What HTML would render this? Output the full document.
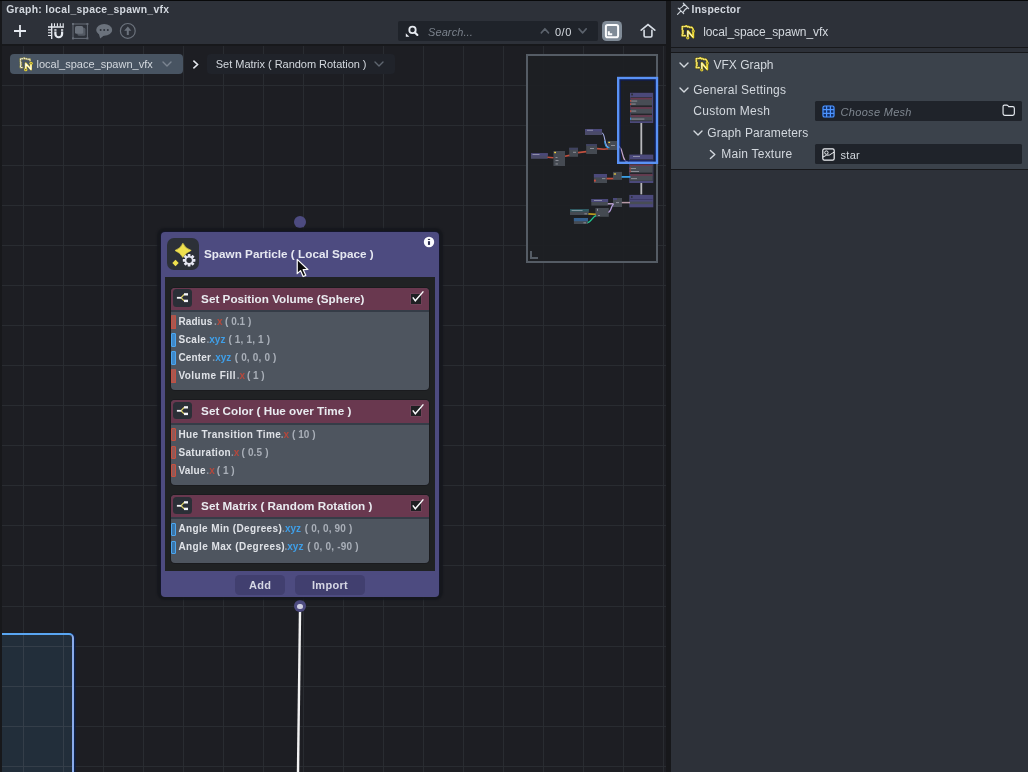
<!DOCTYPE html>
<html><head><meta charset="utf-8">
<style>
*{box-sizing:border-box;margin:0;padding:0}
html,body{width:1028px;height:772px;overflow:hidden;background:#17181b;font-family:"Liberation Sans",sans-serif;}
.abs{position:absolute}
#root{will-change:transform;position:absolute;left:0;top:0;width:1028px;height:772px;overflow:hidden;background:#17181b}
.t{position:absolute;white-space:pre;line-height:1}
/* graph panel */
#gpanel{position:absolute;left:2px;top:0;width:664px;height:772px;background:#1d1e23;overflow:hidden}

#topbar{position:absolute;left:0;top:0;width:664px;height:44px;background:#2d3139}
#topline{position:absolute;left:0;top:44px;width:664px;height:2px;background:#17181b}
/* node */
.row{position:absolute;left:0;height:13px;width:100%}
.port{position:absolute;left:0.2px;top:-0.6px;width:4.6px;height:13.6px;border-radius:1px}
.pr{background:#a85850;border:1px solid #c25043;border-top-color:#a85850}
.pb{background:#3f88c8;border:1px solid #4aa6f0}
.pbo{background:#3b74a6;border:1px solid #4aa6f0}
.lbl{position:absolute;left:7.3px;top:0.7px;font-size:10px;font-weight:bold;color:#e6e8ec;white-space:pre;line-height:12px;letter-spacing:0.39px}
.lbl .x{color:#c9503f;font-weight:normal;letter-spacing:0}
.lbl .z{color:#3fa2ec;font-weight:normal;letter-spacing:0}
.lbl .v{color:#b4b9c1;font-weight:normal;letter-spacing:0.2px;margin-left:0.6px}
.sub{position:absolute;left:171px;width:258.2px;background:#4e555f;border-radius:4px;overflow:hidden;box-shadow:0 0 0 1px #1a1b1e}
.sub .hd{position:absolute;left:0;top:0;width:100%;height:24.3px;background:#69384f;border-bottom:2.3px solid #353c47}
.sub .ib{position:absolute;left:2.3px;top:1.4px;width:18.6px;height:17.7px;background:#2b2f37;border-radius:3.5px}
.sub .ttl{position:absolute;left:30.1px;top:4.9px;font-size:11.7px;font-weight:bold;color:#e9ebf0;white-space:pre;line-height:12px;letter-spacing:0.02px}
.cb{position:absolute;left:239.9px;top:6.2px;width:10.2px;height:10px;background:#1f2023;box-shadow:0 0 0 0.8px rgba(120,80,100,0.55)}
.sub svg.ic{position:absolute;left:0;top:-0.5px}

.row span{position:absolute;top:0.3px;font-size:10px;line-height:12px;white-space:pre}
.lb{font-weight:bold;color:#dfe2e7}
.dt{color:#8f97a1;font-weight:bold}
.sf{font-weight:bold}
.sx{color:#b5483c}
.sz{color:#3f9fe8}
.vl{color:#a9afb8;font-weight:bold}
.pro{background:#905a58;border:1px solid #c8503f}
use{stroke-width:1.4}
</style></head><body><div id="root">

<div id="gpanel">
 <svg id="grid" style="position:absolute;left:0;top:0" width="664" height="772" shape-rendering="crispEdges"><g fill="#292c31"><rect x="0" y="85" width="664" height="1"/><rect x="0" y="125" width="664" height="1"/><rect x="0" y="165" width="664" height="1"/><rect x="0" y="205" width="664" height="1"/><rect x="0" y="245" width="664" height="1"/><rect x="0" y="285" width="664" height="1"/><rect x="0" y="325" width="664" height="1"/><rect x="0" y="365" width="664" height="1"/><rect x="0" y="405" width="664" height="1"/><rect x="0" y="445" width="664" height="1"/><rect x="0" y="485" width="664" height="1"/><rect x="0" y="525" width="664" height="1"/><rect x="0" y="565" width="664" height="1"/><rect x="0" y="606" width="664" height="1"/><rect x="0" y="646" width="664" height="1"/><rect x="0" y="686" width="664" height="1"/><rect x="0" y="726" width="664" height="1"/><rect x="0" y="766" width="664" height="1"/><rect x="21" y="46" width="1" height="726"/><rect x="61" y="46" width="1" height="726"/><rect x="101" y="46" width="1" height="726"/><rect x="141" y="46" width="1" height="726"/><rect x="181" y="46" width="1" height="726"/><rect x="221" y="46" width="1" height="726"/><rect x="261" y="46" width="1" height="726"/><rect x="301" y="46" width="1" height="726"/><rect x="341" y="46" width="1" height="726"/><rect x="381" y="46" width="1" height="726"/><rect x="421" y="46" width="1" height="726"/><rect x="461" y="46" width="1" height="726"/><rect x="501" y="46" width="1" height="726"/><rect x="541" y="46" width="1" height="726"/><rect x="581" y="46" width="1" height="726"/><rect x="621" y="46" width="1" height="726"/><rect x="661" y="46" width="1" height="726"/></g></svg>

 <!-- selection box bottom-left -->
 <div class="abs" style="left:-4px;top:633px;width:75.5px;height:160px;background:#222e3a;border:2px solid #59a6f2;border-right-color:#8aabea;border-radius:0 5px 0 0;box-shadow:1.5px 0 0 #0d2148;overflow:hidden">
   <svg class="abs" style="left:0;top:0" width="80" height="140" shape-rendering="crispEdges"><g fill="#343e49"><rect x="0" y="11" width="80" height="1"/><rect x="0" y="51" width="80" height="1"/><rect x="0" y="91" width="80" height="1"/><rect x="0" y="131" width="80" height="1"/><rect x="23" y="0" width="1" height="140"/><rect x="63" y="0" width="1" height="140"/></g></svg>
 </div>

 <!-- connection line -->
 <svg class="abs" style="left:0;top:0" width="664" height="772"><line x1="298" y1="612" x2="296" y2="772" stroke="#f2f2f2" stroke-width="2.4"/></svg>

 <!-- top port -->
 <div class="abs" style="left:291.8px;top:215.8px;width:12.4px;height:12.4px;border-radius:50%;background:#4d4b80"></div>
 <!-- bottom port -->
 <div class="abs" style="left:291.9px;top:600.4px;width:12px;height:12px;border-radius:50%;background:#4d4b80"></div>
 <div class="abs" style="left:295.1px;top:603.6px;width:5.6px;height:5.6px;border-radius:50%;background:#cfcfe0"></div>
</div>

<!-- NODE (absolute page coords) -->
<div class="abs" style="left:160.4px;top:231.2px;width:279.4px;height:366px;background:#14162a;border-radius:5px;box-shadow:0 0 1.5px 2.4px rgba(21,23,28,0.92)"></div>
<div class="abs" style="left:161px;top:232px;width:278.3px;height:364.7px;background:#4d4b80;border-radius:4px"></div>
<div class="abs" style="left:165.2px;top:277.4px;width:270px;height:294px;background:#202224"></div>
<!-- icon box -->
<div class="abs" style="left:167.2px;top:237.9px;width:32px;height:31.9px;background:#2c3038;border-radius:7px"></div>
<svg class="abs" style="left:167px;top:238px" width="33" height="32" viewBox="0 0 33 32">
  <path d="M15.9 5.2 Q18.2 10.6 24.2 12.4 Q18.8 14.4 15.9 19.5 Q13.2 14.6 8 12.5 Q13.8 10.4 15.9 5.2 Z" fill="#efe04e" stroke="#efe04e" stroke-width="0.6" stroke-linejoin="round"/>
  <path d="M8.5 21.8 L11.7 25 L8.5 28.2 L5.3 25Z" fill="#efe04e"/>
  <g transform="translate(22.1,22.3)" fill="#e6e7f2">
   <circle r="4.4"/><rect x="-1.35" y="-6.3" width="2.7" height="3" rx="0.3" transform="rotate(0)"/><rect x="-1.35" y="-6.3" width="2.7" height="3" rx="0.3" transform="rotate(45)"/><rect x="-1.35" y="-6.3" width="2.7" height="3" rx="0.3" transform="rotate(90)"/><rect x="-1.35" y="-6.3" width="2.7" height="3" rx="0.3" transform="rotate(135)"/><rect x="-1.35" y="-6.3" width="2.7" height="3" rx="0.3" transform="rotate(180)"/><rect x="-1.35" y="-6.3" width="2.7" height="3" rx="0.3" transform="rotate(225)"/><rect x="-1.35" y="-6.3" width="2.7" height="3" rx="0.3" transform="rotate(270)"/><rect x="-1.35" y="-6.3" width="2.7" height="3" rx="0.3" transform="rotate(315)"/>
   <circle r="2.7" fill="#2c3038"/>
  </g>
</svg>
<div class="t" style="left:204px;top:248.1px;font-size:11.7px;font-weight:bold;color:#e6e8f1;letter-spacing:0.03px;line-height:12px">Spawn Particle ( Local Space )</div>
<!-- info icon -->
<svg class="abs" style="left:422.9px;top:236px" width="12" height="12" viewBox="0 0 12 12"><circle cx="6" cy="6" r="5.2" fill="#fdfdff"/><rect x="4.95" y="5.2" width="2.1" height="3.7" fill="#2a2c52"/><rect x="4.9" y="2.9" width="2.2" height="1.1" fill="#33344e"/></svg>

<!-- sub node 1 -->
<div class="sub" style="top:287.7px;height:102px">
 <div class="hd"></div><div class="ib"></div>
 <div class="ttl">Set Position Volume (Sphere)</div><div class="cb"></div><svg class="ic" width="259" height="23" viewBox="0 0 259 23"><path d="M10 10.8 L13.2 7.4 M10 10.8 L13.2 13.9" stroke="#d8cf6a" stroke-width="1.3" fill="none"/><rect x="5.9" y="9.9" width="4.3" height="1.8" fill="#f6f6fa"/><rect x="13" y="6.2" width="4" height="2.3" fill="#f6f6fa"/><rect x="13" y="12.7" width="4" height="2.4" fill="#f6f6fa"/><path d="M241.8 10.4 L244.3 13.8 L252.4 4.4" stroke="#fafafc" stroke-width="1.45" fill="none" stroke-linejoin="miter"/></svg>
 <div class="row" style="top:28px"><div class="port pr"></div><span class="lb" style="left:7.40px;letter-spacing:0.111px">Radius</span><span class="dt" style="left:43.02px">.</span><span class="sf sx" style="left:45.90px">x</span><span class="vl" style="left:54.00px;letter-spacing:0.029px">( 0.1 )</span></div>
 <div class="row" style="top:46px"><div class="port pb"></div><span class="lb" style="left:7.40px;letter-spacing:0.340px">Scale</span><span class="dt" style="left:35.42px">.</span><span class="sf sz" style="left:38.30px">xyz</span><span class="vl" style="left:57.40px;letter-spacing:0.158px">( 1, 1, 1 )</span></div>
 <div class="row" style="top:64px"><div class="port pb"></div><span class="lb" style="left:7.40px;letter-spacing:0.143px">Center</span><span class="dt" style="left:41.32px">.</span><span class="sf sz" style="left:44.20px">xyz</span><span class="vl" style="left:63.70px;letter-spacing:0.168px">( 0, 0, 0 )</span></div>
 <div class="row" style="top:82px"><div class="port pr"></div><span class="lb" style="left:7.40px;letter-spacing:0.459px">Volume Fill</span><span class="dt" style="left:65.72px">.</span><span class="sf sx" style="left:68.60px">x</span><span class="vl" style="left:75.90px;letter-spacing:0.000px">( 1 )</span></div>
</div>
<!-- sub node 2 -->
<div class="sub" style="top:400.3px;height:84.7px">
 <div class="hd"></div><div class="ib"></div>
 <div class="ttl">Set Color ( Hue over Time )</div><div class="cb"></div><svg class="ic" width="259" height="23" viewBox="0 0 259 23"><path d="M10 10.8 L13.2 7.4 M10 10.8 L13.2 13.9" stroke="#d8cf6a" stroke-width="1.3" fill="none"/><rect x="5.9" y="9.9" width="4.3" height="1.8" fill="#f6f6fa"/><rect x="13" y="6.2" width="4" height="2.3" fill="#f6f6fa"/><rect x="13" y="12.7" width="4" height="2.4" fill="#f6f6fa"/><path d="M241.8 10.4 L244.3 13.8 L252.4 4.4" stroke="#fafafc" stroke-width="1.45" fill="none" stroke-linejoin="miter"/></svg>
 <div class="row" style="top:28px"><div class="port pro"></div><span class="lb" style="left:7.40px;letter-spacing:0.389px">Hue Transition Time</span><span class="dt" style="left:109.72px">.</span><span class="sf sx" style="left:112.60px">x</span><span class="vl" style="left:121.10px;letter-spacing:0.011px">( 10 )</span></div>
 <div class="row" style="top:46px"><div class="port pro"></div><span class="lb" style="left:7.40px;letter-spacing:0.316px">Saturation</span><span class="dt" style="left:59.92px">.</span><span class="sf sx" style="left:62.80px">x</span><span class="vl" style="left:70.50px;letter-spacing:0.146px">( 0.5 )</span></div>
 <div class="row" style="top:64px"><div class="port pro"></div><span class="lb" style="left:7.40px;letter-spacing:0.240px">Value</span><span class="dt" style="left:35.32px">.</span><span class="sf sx" style="left:38.20px">x</span><span class="vl" style="left:45.70px;letter-spacing:0.055px">( 1 )</span></div>
</div>
<!-- sub node 3 -->
<div class="sub" style="top:495.2px;height:67.5px">
 <div class="hd"></div><div class="ib"></div>
 <div class="ttl">Set Matrix ( Random Rotation )</div><div class="cb"></div><svg class="ic" width="259" height="23" viewBox="0 0 259 23"><path d="M10 10.8 L13.2 7.4 M10 10.8 L13.2 13.9" stroke="#d8cf6a" stroke-width="1.3" fill="none"/><rect x="5.9" y="9.9" width="4.3" height="1.8" fill="#f6f6fa"/><rect x="13" y="6.2" width="4" height="2.3" fill="#f6f6fa"/><rect x="13" y="12.7" width="4" height="2.4" fill="#f6f6fa"/><path d="M241.8 10.4 L244.3 13.8 L252.4 4.4" stroke="#fafafc" stroke-width="1.45" fill="none" stroke-linejoin="miter"/></svg>
 <div class="row" style="top:28px"><div class="port pbo"></div><span class="lb" style="left:7.40px;letter-spacing:0.373px">Angle Min (Degrees)</span><span class="dt" style="left:111.02px">.</span><span class="sf sz" style="left:113.90px">xyz</span><span class="vl" style="left:133.80px;letter-spacing:0.184px">( 0, 0, 90 )</span></div>
 <div class="row" style="top:46px"><div class="port pbo"></div><span class="lb" style="left:7.40px;letter-spacing:0.410px">Angle Max (Degrees)</span><span class="dt" style="left:113.42px">.</span><span class="sf sz" style="left:116.30px">xyz</span><span class="vl" style="left:136.30px;letter-spacing:0.199px">( 0, 0, -90 )</span></div>
</div>
<!-- buttons -->
<div class="abs" style="left:235.2px;top:575.3px;width:49.8px;height:19.5px;background:#413f6f;border-radius:4.5px"></div>
<div class="abs" style="left:295.2px;top:575.3px;width:69.6px;height:19.5px;background:#413f6f;border-radius:4.5px"></div>
<div class="t" style="left:235.2px;top:579.5px;width:49.8px;text-align:center;font-size:11px;font-weight:bold;color:#d6d7e4;letter-spacing:0.3px">Add</div>
<div class="t" style="left:295.2px;top:579.5px;width:69.6px;text-align:center;font-size:11px;font-weight:bold;color:#d6d7e4;letter-spacing:0.3px">Import</div>


<!-- MINIMAP -->
<svg class="abs" style="left:520px;top:50px" width="146" height="220" viewBox="520 50 146 220">
 <rect x="527" y="55" width="130" height="207" fill="#1e2024" fill-opacity="0.95" stroke="#555c65" stroke-width="2"/>
 <!-- nodes row1 -->
 <g>
  <rect x="585" y="129" width="17" height="6" fill="#4a4a68"/><rect x="585" y="129" width="17" height="2.4" fill="#4b497a"/>
  <rect x="607.5" y="141" width="9.5" height="9" fill="#454a52"/><rect x="608.3" y="141.8" width="1.8" height="1.2" fill="#f0d040"/>
  <rect x="586.2" y="144" width="10.8" height="10" fill="#454a52"/><rect x="586.2" y="144" width="10.8" height="2" fill="#3f4260"/>
  <rect x="569.2" y="147.8" width="8.8" height="9" fill="#454a52"/><rect x="569.2" y="147.8" width="8.8" height="2" fill="#3f4260"/>
  <rect x="553.4" y="151" width="11.6" height="15" fill="#454a52"/><rect x="554.2" y="151.8" width="1.8" height="1.4" fill="#f0d040"/>
  <rect x="531" y="153.2" width="16.8" height="5.6" fill="#4a4a68"/><rect x="531" y="153.2" width="16.8" height="2.4" fill="#4b497a"/>
  <path d="M547.5 157.2 L553.4 157.8" stroke="#c0503f" stroke-width="1.6"/>
  <path d="M565 156.2 L569.4 155.4" stroke="#c0503f" stroke-width="1.6"/>
  <path d="M578 152.6 L586.2 151.6" stroke="#c0503f" stroke-width="1.6"/>
  <path d="M597 148.6 L604 149.2 L608 148.8" stroke="#c0503f" stroke-width="1.6" fill="none"/>
  <path d="M602 133 C605.5 133 604 147.5 609 147.5" stroke="#a8b0e8" stroke-width="1.1" fill="none"/>
  <path d="M604.6 141 C605 146.5 606.5 147.6 609.5 147.8" stroke="#3aa0e8" stroke-width="1.1" fill="none"/>
  <path d="M617 145.6 C624 145.6 621 162 628 162" stroke="#c8a8d0" stroke-width="1.2" fill="none"/>
  <g fill="#c8c8d0" fill-opacity="0.6"><rect x="587" y="129.8" width="6" height="0.9"/><rect x="532.5" y="154" width="7" height="0.9"/><rect x="555.5" y="157" width="2" height="0.9"/><rect x="555.5" y="160" width="3" height="0.9"/><rect x="555.5" y="163.5" width="2.4" height="0.9"/><rect x="573" y="151.8" width="3" height="0.9"/><rect x="590" y="148" width="4" height="0.9"/><rect x="611" y="145" width="4" height="0.9"/></g>
 </g>
 <!-- main node 1 (in viewport) -->
 <g>
  <rect x="630" y="92.8" width="23.2" height="30.2" fill="#4b497a"/>
  <rect x="630.6" y="97.2" width="21.4" height="24" fill="#25262b"/>
  <rect x="630.6" y="97.8" width="21.4" height="7.6" fill="#484d55"/><rect x="630.6" y="97.8" width="21.4" height="1.6" fill="#6a394f"/>
  <rect x="630.6" y="107.2" width="21.4" height="6.4" fill="#484d55"/><rect x="630.6" y="107.2" width="21.4" height="1.6" fill="#6a394f"/>
  <rect x="630.6" y="115.2" width="21.4" height="5.4" fill="#484d55"/><rect x="630.6" y="115.2" width="21.4" height="1.6" fill="#6a394f"/>
  <g fill="#c8c8d0" fill-opacity="0.6"><rect x="631.2" y="100.6" width="6" height="0.9"/><rect x="631.2" y="103.6" width="4.5" height="0.9"/><rect x="631.2" y="110.6" width="5" height="0.9"/><rect x="631.4" y="118.6" width="13" height="0.9"/></g>
  <g fill="#d0503f"><rect x="630.2" y="100" width="1" height="1.8"/><rect x="630.2" y="103.2" width="1" height="1.8"/><rect x="630.2" y="110.2" width="1" height="2"/></g>
  <rect x="630.2" y="117.6" width="1" height="2.2" fill="#3fa2ec"/>
  <rect x="631.2" y="93.6" width="1.8" height="1.8" fill="#2c3038"/>
  <rect x="640.4" y="123" width="1.8" height="31.6" fill="#b8b8bc"/>
 </g>
 <!-- main node 2 -->
 <g>
  <rect x="629.3" y="154.6" width="24" height="28.4" fill="#4b497a"/>
  <rect x="630" y="159" width="22.6" height="22" fill="#25262b"/>
  <rect x="630" y="159.4" width="22.6" height="4.2" fill="#4b497a" fill-opacity="0.7"/>
  <rect x="630" y="164.6" width="22.6" height="8" fill="#484d55"/><rect x="630" y="164.6" width="22.6" height="1.4" fill="#6a394f"/>
  <rect x="630" y="174.2" width="22.6" height="6.6" fill="#484d55"/><rect x="630" y="174.2" width="22.6" height="1.6" fill="#6a394f"/>
  <g fill="#c8c8d0" fill-opacity="0.6"><rect x="633" y="156" width="7" height="0.9"/><rect x="631" y="168" width="5" height="0.9"/><rect x="631" y="171" width="8" height="0.9"/><rect x="631" y="178.2" width="6" height="0.9"/></g>
  <g fill="#d0503f"><rect x="629.6" y="167.6" width="1" height="1.8"/><rect x="629.6" y="170.4" width="1" height="1.8"/></g>
  <rect x="640.4" y="183" width="1.8" height="11.4" fill="#b8b8bc"/>
 </g>
 <!-- main node 3 -->
 <g>
  <rect x="629.3" y="194.9" width="24" height="12.4" fill="#4b497a"/>
  <rect x="630" y="199" width="22.6" height="1" fill="#3c3a66"/>
  <rect x="630" y="201.6" width="22.6" height="2.6" fill="#484d55"/>
  <rect x="631" y="196.2" width="1.6" height="1.6" fill="#2c3038"/>
 </g>
 <!-- row 2 -->
 <g>
  <rect x="593.9" y="174" width="13.1" height="9" fill="#454a52"/><rect x="593.9" y="174" width="13.1" height="3.4" fill="#4b497a"/>
  <rect x="594" y="179.6" width="1.8" height="2" fill="#d0503f"/>
  <rect x="613" y="171.9" width="9" height="8" fill="#454a52"/><rect x="613.8" y="173.4" width="2.2" height="1.2" fill="#f0d040"/>
  <path d="M606.6 178.6 L613.2 178.6" stroke="#c0503f" stroke-width="1.8"/>
  <path d="M621.6 176.9 L630.4 176.9" stroke="#3aa0e8" stroke-width="1.8"/>
  <rect x="602" y="178.2" width="3.4" height="0.9" fill="#c8c8d0" fill-opacity="0.6"/>
 </g>
 <!-- row 3 -->
 <g>
  <rect x="591.3" y="199" width="16.8" height="6.6" fill="#454a52"/><rect x="591.3" y="199" width="16.8" height="3" fill="#4b497a"/>
  <rect x="613" y="198" width="9" height="9" fill="#454a52"/><rect x="613" y="198" width="4" height="2" fill="#4b497a"/>
  <path d="M607.8 203.8 L613.4 203.8" stroke="#b8a0c8" stroke-width="1.5"/>
  <path d="M621.8 202.6 L630 202.6" stroke="#b89aa8" stroke-width="1.5"/>
  <rect x="570" y="209" width="18.8" height="6" fill="#454a52"/><rect x="570" y="209" width="18.8" height="2.6" fill="#2f5a62"/>
  <rect x="595.4" y="208" width="13.4" height="8.8" fill="#454a52"/><rect x="597" y="208.8" width="1" height="2" fill="#c8c8d0" fill-opacity="0.6"/>
  <rect x="573.9" y="218" width="14.1" height="6" fill="#454a52"/><rect x="573.9" y="218" width="14.1" height="3.2" fill="#35608e"/>
  <path d="M588.4 213.8 L595.8 214.4" stroke="#b89a20" stroke-width="1.8"/>
  <path d="M587.6 222.6 C591 222.6 592.5 216.6 596 215.6" stroke="#20c890" stroke-width="1.3" fill="none"/>
  <path d="M608.4 212.4 C611 212 611.4 205 613.6 204.2" stroke="#b8a0e0" stroke-width="1.3" fill="none"/>
  <g fill="#c8c8d0" fill-opacity="0.6"><rect x="594" y="200" width="8" height="0.9"/><rect x="571.6" y="210" width="11" height="0.9"/><rect x="584.4" y="213.4" width="2.6" height="0.9"/><rect x="583.4" y="222.4" width="2.6" height="0.9"/><rect x="598" y="215" width="2" height="0.9"/><rect x="616" y="202.2" width="3" height="0.9"/></g>
 </g>
 <!-- corner glyph -->
 <path d="M531 251 V258 H538" fill="none" stroke="#555c65" stroke-width="2"/>
 <!-- viewport rect -->
 <rect x="620.1" y="79.9" width="35" height="81" fill="none" stroke="#0b1d6a" stroke-opacity="0.85" stroke-width="1.3"/><rect x="618.2" y="78" width="38.8" height="84.8" fill="none" stroke="#5a92f6" stroke-width="2.4"/>
</svg>


<!-- cursor -->
<svg class="abs" style="left:294.1px;top:256.3px" width="19" height="24.7" viewBox="0 0 20 26"><path d="M3.4 3.6 V18.6 L6.9 15.4 L9.6 21.6 L12.4 20.4 L9.7 14.4 L14.6 14.2 Z" fill="#0a0a0a" stroke="#fafafa" stroke-width="1.3" stroke-linejoin="round"/></svg>

<!-- TOPBAR -->
<div class="abs" style="left:2px;top:0;width:664px;height:44px;background:#2d3139"></div>
<div class="abs" style="left:2px;top:44px;width:664px;height:2px;background:#17181b"></div>
<div class="t" style="left:6.2px;top:5px;font-size:10.4px;font-weight:bold;color:#d3d8df;letter-spacing:0.3px">Graph: local_space_spawn_vfx</div>


<!-- toolbar icons -->
<svg class="abs" style="left:0;top:0" width="670" height="46" viewBox="0 0 670 46">
 <defs>
  <g id="vfxi">
   <path d="M4.2 10.7 L1.3 10.7 L1.3 9 L2.2 8 L1.3 7 L2.2 6 L1.3 5 L1.3 1.5 L4.2 1.5 L5.4 0.8 L6.4 1.9 L7.6 1.5 L8.6 2.3 L11 2.3 L12.2 4.4" fill="none" stroke="#3a3610" stroke-opacity="0.55" stroke-width="3" stroke-linejoin="round" stroke-linecap="round"/>
   <path d="M6.8 12.4 L6.8 6 L12.2 12.4 L12.2 6.4" fill="none" stroke="#3a3610" stroke-opacity="0.55" stroke-width="3.2" stroke-linejoin="round" stroke-linecap="round"/>
   <path d="M4.2 10.7 L1.3 10.7 L1.3 9 L2.2 8 L1.3 7 L2.2 6 L1.3 5 L1.3 1.5 L4.2 1.5 L5.4 0.8 L6.4 1.9 L7.6 1.5 L8.6 2.3 L11 2.3 L12.2 4.4" fill="none" stroke="#ecd838" stroke-width="1.7" stroke-linejoin="round" stroke-linecap="round"/>
   <path d="M4.2 10.7 L1.3 10.7 L1.3 9 L2.2 8 L1.3 7 L2.2 6 L1.3 5 L1.3 1.5 L4.2 1.5 L5.4 0.8 L6.4 1.9 L7.6 1.5 L8.6 2.3 L11 2.3 L12.2 4.4" fill="none" stroke="#f8f6e0" stroke-width="0.7" stroke-dasharray="1.2 1.4" stroke-linejoin="round"/>
   <path d="M6.8 12.4 L6.8 6 L12.2 12.4 L12.2 6.4" fill="none" stroke="#ecd838" stroke-width="2" stroke-linejoin="round" stroke-linecap="round"/>
   <circle cx="6.8" cy="12.8" r="1.6" fill="#ecd838"/><circle cx="12.2" cy="6.1" r="1.6" fill="#ecd838"/>
   <path d="M6.8 11.8 L6.8 6.2 L11.8 12" fill="none" stroke="#fbfbf4" stroke-width="0.9" stroke-linejoin="round"/>
   <circle cx="6.8" cy="12.8" r="0.6" fill="#4a4620"/><circle cx="12.2" cy="6.1" r="0.6" fill="#4a4620"/>
  </g>
  <g id="vfxw">
   <path d="M3.6 10.9 L1.5 10.9 L1.5 9.2 L2.4 8.2 L1.5 7.2 L2.4 6.2 L1.5 5.2 L1.5 1.7 L4.2 1.7 L5.4 1 L6.4 2.1 L7.6 1.7 L8.6 2.4 L11.4 2.4 L11.4 3.8" fill="none" stroke="#d8c42c" stroke-opacity="0.55" stroke-width="2" stroke-linejoin="round" stroke-linecap="round"/>
   <path d="M3.6 10.9 L1.5 10.9 L1.5 9.2 L2.4 8.2 L1.5 7.2 L2.4 6.2 L1.5 5.2 L1.5 1.7 L4.2 1.7 L5.4 1 L6.4 2.1 L7.6 1.7 L8.6 2.4 L11.4 2.4 L11.4 3.8" fill="none" stroke="#f6f4ea" stroke-width="1.05" stroke-dasharray="2 0.7" stroke-linejoin="round"/>
   <path d="M7 12.6 L7 6.6 L12.4 12.8 L12.4 6.8" fill="none" stroke="#e4ce30" stroke-width="2.1" stroke-linejoin="round" stroke-linecap="round"/>
   <circle cx="7" cy="13.1" r="1.75" fill="#ecd838"/><circle cx="12.5" cy="6.5" r="1.7" fill="#ecd838"/>
   <path d="M7 12 L7 6.8 L12.3 12.8 L12.3 8" fill="none" stroke="#fdfdf8" stroke-width="1.15" stroke-linejoin="round"/>
   <circle cx="7" cy="13.1" r="0.65" fill="#4a4620"/><circle cx="12.5" cy="6.5" r="0.65" fill="#5a5630"/>
  </g>
  <path id="chev" d="M0 0 L4 4 L8 0" fill="none" stroke-linecap="round" stroke-linejoin="round"/>
 </defs>
 <!-- plus -->
 <path d="M14 31 H26 M20 25 V37" stroke="#e6eaf0" stroke-width="1.8" fill="none"/>
 <!-- snap -->
 <g stroke="#e6eaf0" fill="none">
  <path d="M48 27 H64 M51.7 23.2 V39" stroke-width="1.3"/>
  <path d="M54.5 23.2 V26.5 M57.4 23.2 V26.5 M60.3 23.2 V26.5 M63.2 23.2 V26.5" stroke-width="1.1"/>
  <path d="M48 29.9 H51.2 M48 32.7 H51.2 M48 35.5 H51.2" stroke-width="1.1"/>
  <path d="M55.4 31.6 V33.9 A3.35 3.35 0 0 0 62.1 33.9 V31.6" stroke-width="2.2"/><path d="M54.3 30 H56.5 M61 30 H63.2" stroke-width="1.3"/>
 </g>
 <!-- group -->
 <g>
  <rect x="73" y="24" width="14.4" height="14.4" fill="none" stroke="#666d77" stroke-width="1"/>
  <rect x="72" y="23" width="2" height="2" fill="#666d77"/><rect x="86.4" y="23" width="2" height="2" fill="#666d77"/>
  <rect x="72" y="37.4" width="2" height="2" fill="#666d77"/><rect x="86.4" y="37.4" width="2" height="2" fill="#666d77"/>
  <rect x="77.5" y="27.8" width="8" height="8" rx="1.6" fill="#535963"/>
  <rect x="75" y="25.9" width="8.2" height="7.9" rx="1.6" fill="#6b727c"/>
 </g>
 <!-- comment -->
 <g>
  <ellipse cx="104.2" cy="29.9" rx="8" ry="5.8" fill="#6b727c"/>
  <path d="M98.6 33 L100.2 38.6 L104.5 35 Z" fill="#6b727c"/>
  <circle cx="100.6" cy="29.9" r="1" fill="#2d3139"/><circle cx="104.2" cy="29.9" r="1" fill="#2d3139"/><circle cx="107.8" cy="29.9" r="1" fill="#2d3139"/>
 </g>
 <!-- up arrow circle -->
 <g>
  <circle cx="127.8" cy="30.9" r="7.4" fill="none" stroke="#6b727c" stroke-width="1.2"/>
  <path d="M127.8 26.6 L131.4 30.8 L128.8 30.8 L128.8 35 L126.8 35 L126.8 30.8 L124.2 30.8 Z" fill="#6b727c"/>
 </g>
 <!-- search box -->
 <rect x="398" y="21" width="200" height="20" rx="2" fill="#1f232a"/>
 <g>
  <circle cx="412.5" cy="29.9" r="3.2" fill="none" stroke="#e6eaf0" stroke-width="1.8"/>
  <path d="M414.9 32.4 L417.4 35" stroke="#e6eaf0" stroke-width="2.1" stroke-linecap="round"/>
  <path d="M405.8 33.2 V36.8 H409.4 Z" fill="#e6eaf0"/>
 </g>
 <use href="#chev" transform="translate(541.3,32.8) scale(0.9,-1)" stroke="#5c636d" style="stroke-width:1.75"/>
 <use href="#chev" transform="translate(579,28.9) scale(0.9,1)" stroke="#5c636d" style="stroke-width:1.75"/>
 <!-- minimap toggle -->
 <rect x="602" y="21" width="20" height="20" rx="4.5" fill="#808b97"/>
 <rect x="605.9" y="24.9" width="12.2" height="12.3" rx="1.8" fill="none" stroke="#fbfcfd" stroke-width="2"/>
 <path d="M607.8 31.2 H609.8 V33.2 H612.2 V35.3 H607.8 Z" fill="#fbfcfd"/>
 <!-- home -->
 <path d="M641.2 30.2 L648 24.6 L654.8 30.2" fill="none" stroke="#d8dee6" stroke-width="1.6" stroke-linecap="round" stroke-linejoin="miter"/>
 <path d="M644.1 30.2 V35.8 Q644.1 37 645.3 37 H650.7 Q651.9 37 651.9 35.8 V30.2" fill="none" stroke="#d8dee6" stroke-width="1.6" stroke-linecap="round"/>
</svg>
<div class="t" style="left:428px;top:27px;font-size:11px;font-style:italic;color:#7a818b;letter-spacing:0.1px">Search...</div>
<div class="t" style="left:555px;top:26.8px;font-size:11px;color:#d6dbe1;letter-spacing:0.5px">0/0</div>

<!-- breadcrumbs -->
<div class="abs" style="left:10px;top:54px;width:173px;height:20px;background:#485462;border-radius:4px"></div>
<svg class="abs" style="left:19.4px;top:57px" width="14.5" height="14.5" viewBox="0 0 15 15"><use href="#vfxw"/></svg>
<div class="t" style="left:36.5px;top:58.5px;font-size:11px;color:#d3d8de">local_space_spawn_vfx</div>
<svg class="abs" style="left:162px;top:61.2px" width="10" height="8" viewBox="-1 -1 10 8"><use href="#chev" stroke="#7b8591"/></svg>
<svg class="abs" style="left:192px;top:59px" width="8" height="11" viewBox="0 0 8 11"><path d="M1.4 1.6 L5.6 5.5 L1.4 9.4" fill="none" stroke="#e6eaf0" stroke-width="1.5"/></svg>
<div class="abs" style="left:207px;top:54px;width:188px;height:20px;background:#20232a;border-radius:4px"></div>
<div class="t" style="left:215.8px;top:58.5px;font-size:11px;color:#d3d8de;letter-spacing:-0.03px">Set Matrix ( Random Rotation )</div>
<svg class="abs" style="left:373.7px;top:61.2px" width="10" height="8" viewBox="-1 -1 10 8"><use href="#chev" stroke="#5f6670"/></svg>

<!-- INSPECTOR -->
<div class="abs" style="left:671px;top:0;width:357px;height:772px;background:#2d3139"></div>
<div class="abs" style="left:671px;top:47px;width:357px;height:1px;background:#17181b"></div>
<div class="abs" style="left:671px;top:52px;width:357px;height:1px;background:#17181b"></div>
<div class="abs" style="left:671px;top:53px;width:357px;height:116px;background:#3b424b"></div>
<div class="abs" style="left:671px;top:169px;width:357px;height:1px;background:#17181b"></div>


<!-- inspector content -->
<svg class="abs" style="left:676px;top:1px" width="15" height="15" viewBox="676 1 15 15">
 <g transform="translate(686.05,5.85) rotate(45)" fill="none" stroke="#cfd5dc" stroke-width="1.15" stroke-linecap="round">
  <path d="M-3.8 0.1 H3.8 M-2.4 0.1 Q-1.3 3.6 -2.6 7.2 M2.4 0.1 Q1.3 3.6 2.6 7.2 M-3.9 7.2 H3.9 M0 7.2 V12"/>
 </g>
</svg>
<div class="t" style="left:691.6px;top:5px;font-size:10.4px;font-weight:bold;color:#d3d8df;letter-spacing:0.27px">Inspector</div>
<svg class="abs" style="left:680.5px;top:24.5px" width="15" height="15" viewBox="0 0 15 15"><use href="#vfxi"/></svg>
<div class="t" style="left:703.2px;top:25.8px;font-size:12px;color:#d3d8de;letter-spacing:-0.09px">local_space_spawn_vfx</div>

<svg class="abs" style="left:679px;top:61.7px" width="10" height="8" viewBox="-1 -1 10 8"><use href="#chev" stroke="#d3d8de"/></svg>
<svg class="abs" style="left:694.5px;top:57px" width="15" height="15" viewBox="0 0 15 15"><use href="#vfxi"/></svg>
<div class="t" style="left:713.5px;top:59px;font-size:12px;color:#d3d8de">VFX Graph</div>

<svg class="abs" style="left:679px;top:86.5px" width="10" height="8" viewBox="-1 -1 10 8"><use href="#chev" stroke="#d3d8de"/></svg>
<div class="t" style="left:693.3px;top:84px;font-size:12px;color:#d3d8de;letter-spacing:0.22px">General Settings</div>
<div class="t" style="left:693.3px;top:105px;font-size:12px;color:#d3d8de;letter-spacing:0.25px">Custom Mesh</div>
<svg class="abs" style="left:692.8px;top:129.6px" width="10" height="8" viewBox="-1 -1 10 8"><use href="#chev" stroke="#d3d8de"/></svg>
<div class="t" style="left:707.3px;top:127px;font-size:12px;color:#d3d8de;letter-spacing:0.15px">Graph Parameters</div>
<svg class="abs" style="left:708.5px;top:148.5px" width="8" height="11" viewBox="0 0 8 11"><path d="M1.4 1.4 L5.8 5.5 L1.4 9.6" fill="none" stroke="#d3d8de" stroke-width="1.4" stroke-linecap="round" stroke-linejoin="round"/></svg>
<div class="t" style="left:721.3px;top:148px;font-size:12px;color:#d3d8de;letter-spacing:0.22px">Main Texture</div>

<div class="abs" style="left:815px;top:101.2px;width:207px;height:19.5px;background:#1f232a;border-radius:1.5px"></div>
<div class="abs" style="left:815px;top:144px;width:207px;height:19.5px;background:#1f232a;border-radius:1.5px"></div>
<!-- mesh icon -->
<svg class="abs" style="left:821.5px;top:104.8px" width="13" height="13" viewBox="0 0 13 13">
 <rect x="0.4" y="0.4" width="12.2" height="12.2" rx="2" fill="#12306a"/>
 <g stroke="#4d95ff" stroke-width="1.2" fill="none"><rect x="1" y="1" width="11" height="11" rx="1.6"/><path d="M4.6 1 V12 M8.4 1 V12 M1 4.6 H12 M1 8.4 H12"/></g>
</svg>
<div class="t" style="left:840.6px;top:106.8px;font-size:11px;font-style:italic;color:#7f8790;letter-spacing:0.3px">Choose Mesh</div>
<!-- folder icon -->
<svg class="abs" style="left:1002.3px;top:104.2px" width="13.4" height="12.5" viewBox="0 0 14 13"><path d="M1.1 2.6 Q1.1 1.2 2.5 1.2 H5 Q5.8 1.2 6.3 1.8 L7 2.7 H11.2 Q12.9 2.7 12.9 4.4 V10 Q12.9 11.8 11.2 11.8 H2.8 Q1.1 11.8 1.1 10 Z" fill="none" stroke="#e6eaf0" stroke-width="1.2" stroke-linejoin="round"/></svg>
<!-- texture icon -->
<svg class="abs" style="left:821.5px;top:147.5px" width="13" height="13" viewBox="0 0 13 13">
 <rect x="0.8" y="0.8" width="11.4" height="11.4" rx="1.6" fill="none" stroke="#f0f2f5" stroke-width="1.2"/>
 <circle cx="4.4" cy="4.6" r="1.7" fill="none" stroke="#f0f2f5" stroke-width="1"/>
 <path d="M1 9 L4.6 7.2 L7.4 7 L12 4.2" fill="none" stroke="#f0f2f5" stroke-width="1"/>
</svg>
<div class="t" style="left:840.6px;top:149.6px;font-size:11px;color:#d3d8de;letter-spacing:0.25px">star</div>

<div class="abs" style="left:0;top:0;width:1028px;height:1px;background:#08090a"></div>
</div></body></html>
